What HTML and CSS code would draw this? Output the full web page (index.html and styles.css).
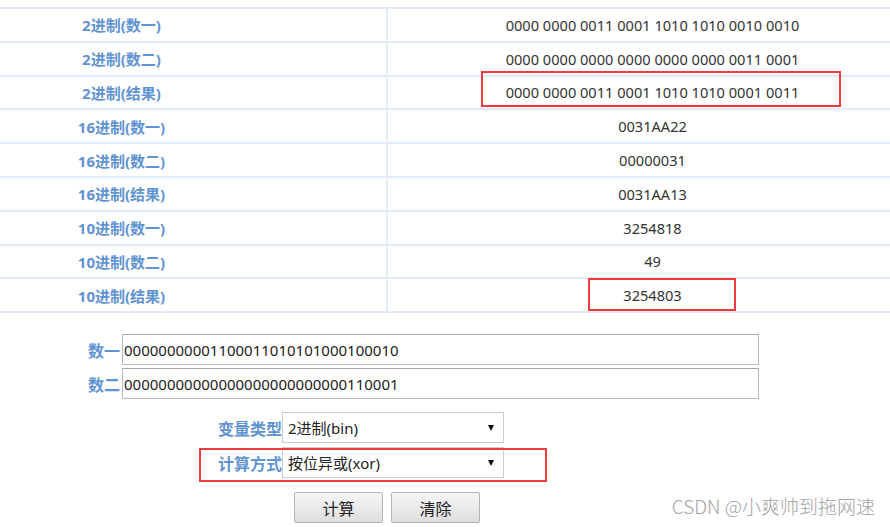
FILE: index.html
```html
<!DOCTYPE html>
<html lang="zh-CN">
<head>
    <meta charset="UTF-8">
    <meta name="viewport" content="width=device-width, initial-scale=1.0">
    <title>位运算计算器</title>

    <link rel="stylesheet" href="styles.css">
</head>
<body>
    <div class="pagina">
        <table class="resultado">
            <tr><th>2进制(数一)</th><td>0000 0000 0011 0001 1010 1010 0010 0010</td></tr>
            <tr><th>2进制(数二)</th><td>0000 0000 0000 0000 0000 0000 0011 0001</td></tr>
            <tr><th>2进制(结果)</th><td>0000 0000 0011 0001 1010 1010 0001 0011</td></tr>
            <tr><th>16进制(数一)</th><td>0031AA22</td></tr>
            <tr><th>16进制(数二)</th><td>00000031</td></tr>
            <tr><th>16进制(结果)</th><td>0031AA13</td></tr>
            <tr><th>10进制(数一)</th><td>3254818</td></tr>
            <tr><th>10进制(数二)</th><td>49</td></tr>
            <tr><th>10进制(结果)</th><td>3254803</td></tr>
        </table>

        <div class="numeros">
            <div class="fila">
                <label class="etiqueta">数一</label>
                <input class="campo" type="text" value="00000000001100011010101000100010">
            </div>
            <div class="fila">
                <label class="etiqueta">数二</label>
                <input class="campo" type="text" value="00000000000000000000000000110001">
            </div>
        </div>

        <div class="opciones">
            <div class="fila">
                <label class="etiqueta">变量类型</label>
                <span class="lista">
                    <select>
                        <option>2进制(bin)</option>
                        <option>10进制(dec)</option>
                        <option>16进制(hex)</option>
                    </select>
                </span>
            </div>
            <div class="fila">
                <label class="etiqueta">计算方式</label>
                <span class="lista">
                    <select>
                        <option>按位异或(xor)</option>
                        <option>按位与(and)</option>
                        <option>按位或(or)</option>
                    </select>
                </span>
            </div>
        </div>

        <div class="botones">
            <button class="boton">计算</button>
            <button class="boton">清除</button>
        </div>

        <!-- marcas rojas sobre la captura -->
        <span class="marca marca-bin"></span>
        <span class="marca marca-dec"></span>
        <span class="marca marca-modo"></span>

        <div class="firma">CSDN @小爽帅到拖网速</div>
    </div>
</body>
</html>
```

FILE: styles.css
```css
body {
    margin: 0;
    background-color: #ffffff;
    font-family: "Noto Sans", "Noto Sans CJK SC", sans-serif;
    color: #333333;
    overflow: hidden;
}

.pagina {
    position: relative;
    width: 890px;
    height: 527px;
    box-sizing: border-box;
    padding-top: 7px;
}

.resultado {
    border-collapse: collapse;
    width: 1064px;
    margin-left: -145px;
    table-layout: fixed;
}

.resultado th, .resultado td {
    width: 50%;
    height: 31.8px;
    padding: 0;
    border: 2px solid #e2ebf7;
    text-align: center;
    font-size: 14.6px;
}

.resultado th {
    color: #5f93d2;
    font-weight: bold;
    font-size: 15px;
}

.resultado td {
    color: #333333;
}

.fila {
    display: flex;
    align-items: center;
}

.etiqueta {
    color: #5f93d2;
    font-weight: bold;
    font-size: 16px;
}

.numeros {
    margin-top: 21px;
    margin-left: 88px;
    display: flex;
    flex-direction: column;
    gap: 3px;
}

.numeros .etiqueta {
    width: 34px;
}

.campo {
    width: 637px;
    height: 31px;
    box-sizing: border-box;
    border: 1px solid #b9b9b9;
    border-top-color: #a8a8a8;
    padding: 0 1px;
    font-family: "Noto Sans", "Noto Sans CJK SC", sans-serif;
    font-size: 15px;
    color: #222222;
}

.opciones {
    margin-top: 13px;
    margin-left: 218px;
    display: flex;
    flex-direction: column;
    gap: 4px;
}

.opciones .etiqueta {
    width: 64px;
}

.lista {
    position: relative;
    display: inline-block;
}

.lista select {
    appearance: none;
    -webkit-appearance: none;
    width: 222px;
    height: 31px;
    box-sizing: border-box;
    border: 1px solid #cccccc;
    background-color: #ffffff;
    padding: 0 20px 0 5px;
    font-family: "Noto Sans", "Noto Sans CJK SC", sans-serif;
    font-size: 15px;
    color: #222222;
}

/* flecha del desplegable */
.lista::after {
    content: "";
    position: absolute;
    right: 10px;
    top: 13px;
    border-left: 3.5px solid transparent;
    border-right: 3.5px solid transparent;
    border-top: 6px solid #111111;
    pointer-events: none;
}

.botones {
    margin-top: 14px;
    margin-left: 294px;
    display: flex;
    gap: 8px;
}

.boton {
    width: 89px;
    height: 31px;
    border: 1px solid #b4b4b4;
    border-radius: 2px;
    background: linear-gradient(#f6f6f6, #dedede);
    font-family: "Noto Sans CJK SC", sans-serif;
    font-size: 16px;
    color: #222222;
    cursor: pointer;
}

.marca {
    position: absolute;
    box-sizing: border-box;
    border: 2.5px solid #ef3b3e;
}

.marca-bin {
    left: 481px;
    top: 71px;
    width: 360px;
    height: 36px;
}

.marca-dec {
    left: 588px;
    top: 278px;
    width: 148px;
    height: 33px;
}

.marca-modo {
    left: 199px;
    top: 448px;
    width: 348px;
    height: 34px;
}

.firma {
    position: absolute;
    right: 15px;
    bottom: 8px;
    font-family: "Noto Sans CJK SC", sans-serif;
    font-size: 19px;
    font-weight: 300;
    color: #a3a3a3;
    text-shadow: 0 0 2px #ffffff;
}
```
